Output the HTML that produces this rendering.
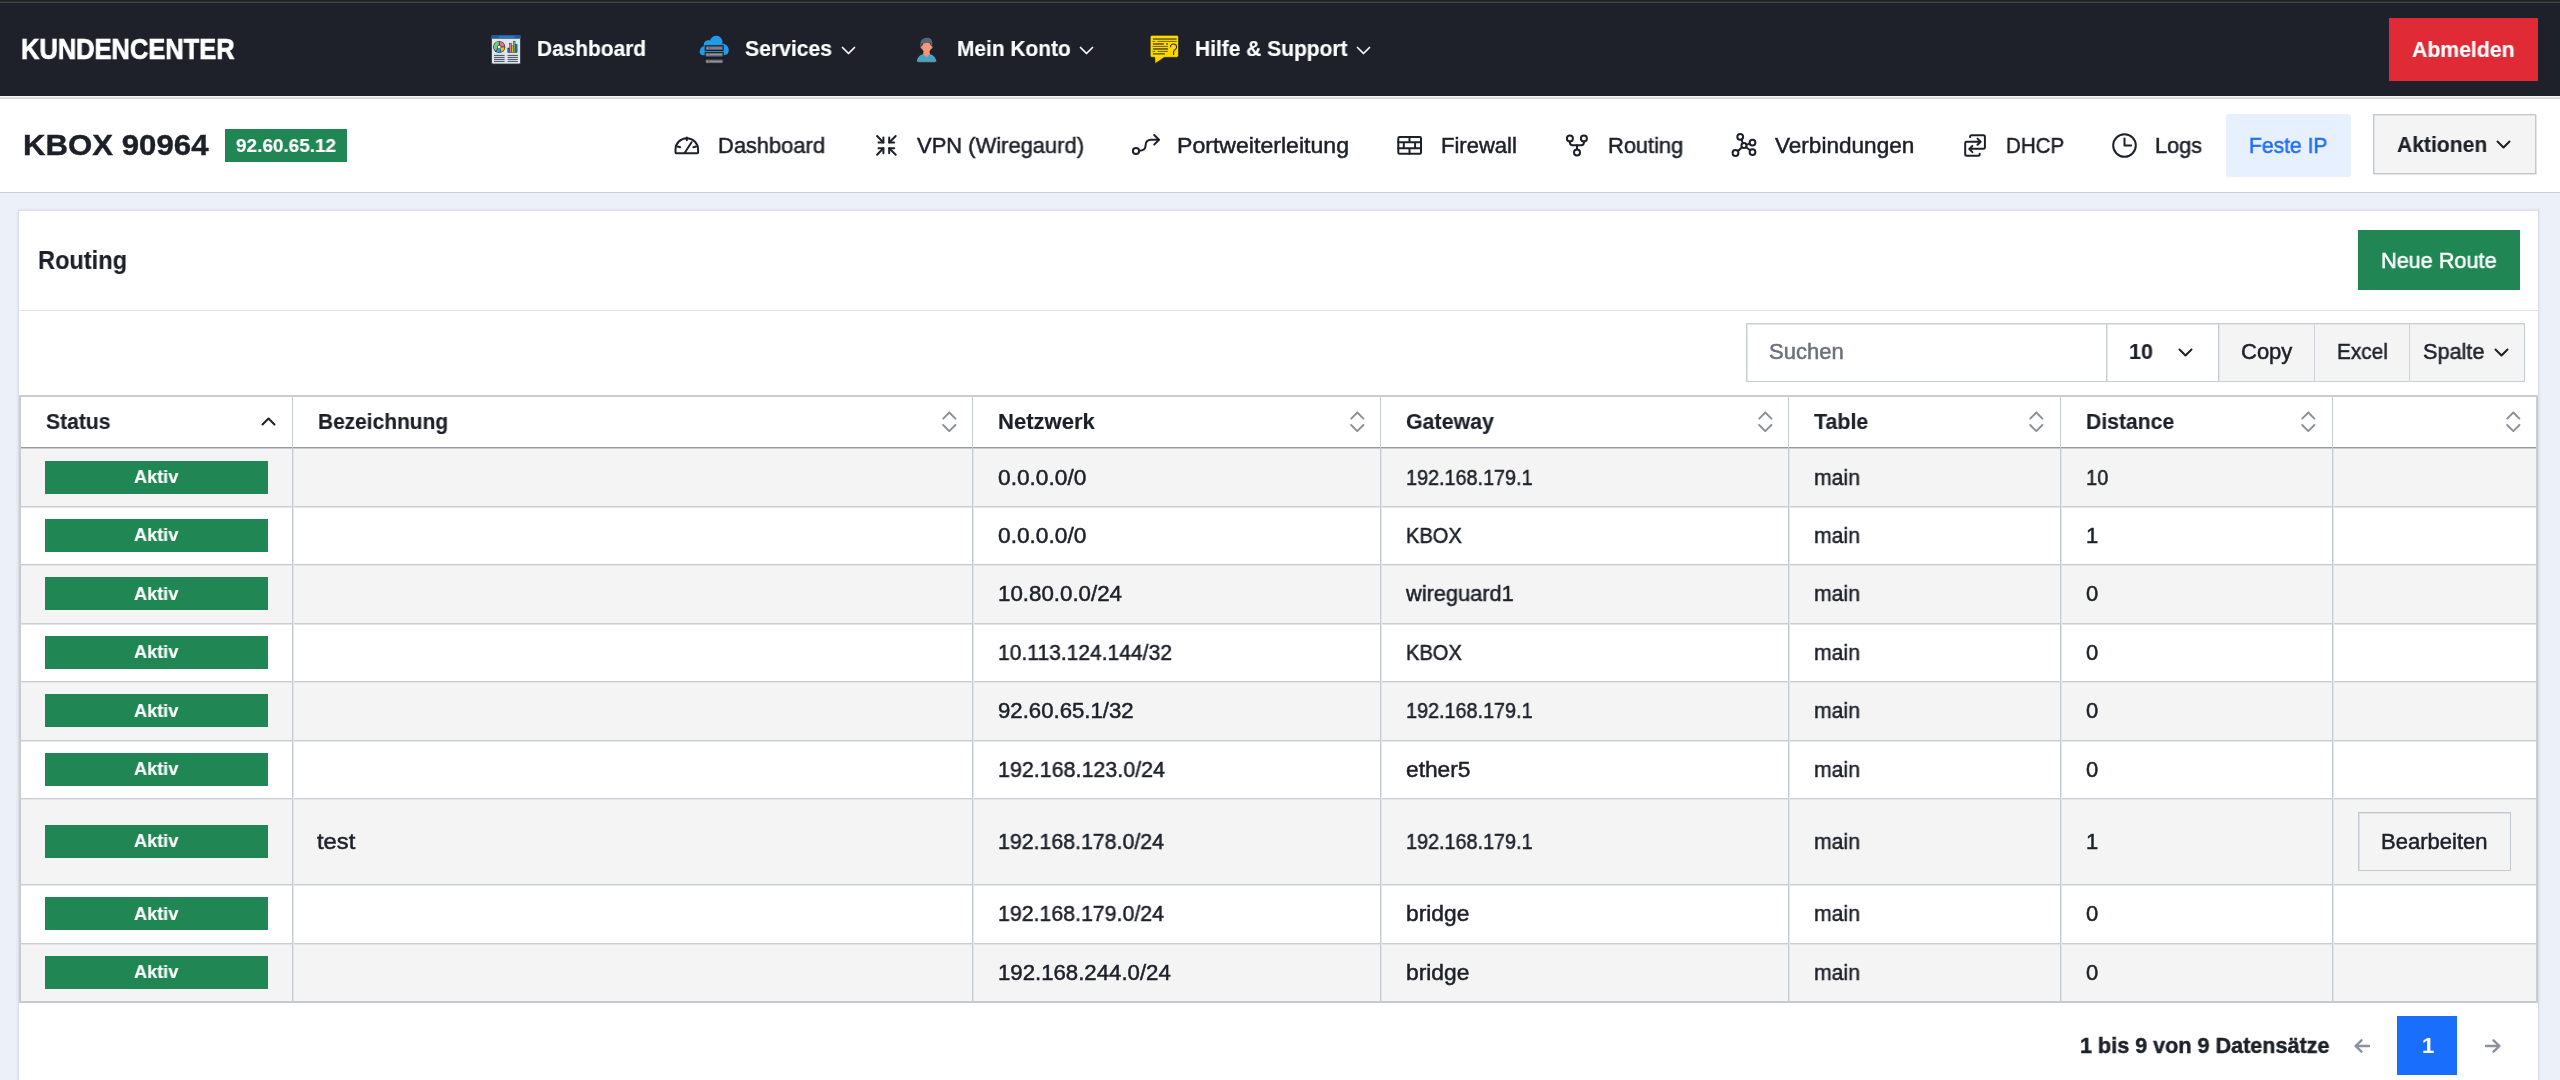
<!DOCTYPE html>
<html><head><meta charset="utf-8"><title>Routing</title>
<style>
html,body{margin:0;padding:0}
body{width:2560px;height:1080px;overflow:hidden;position:relative;background:#ecf0f8;font-family:"Liberation Sans",sans-serif}
.b{position:absolute;display:block}
.t{position:absolute;white-space:nowrap;line-height:1;will-change:transform}
.t.r{-webkit-text-stroke:0.5px currentColor}
.t.bb{-webkit-text-stroke:0.15px currentColor}
</style></head><body>
<div class="b" style="left:0px;top:0px;width:2560px;height:96px;background:#1e212a"></div>
<div class="b" style="left:0px;top:0px;width:2560px;height:1px;background:#212121"></div>
<div class="b" style="left:0px;top:1px;width:2560px;height:1px;background:#2e2e2e"></div>
<div class="b" style="left:0px;top:2px;width:2560px;height:1px;background:#434343"></div>
<div class="b" style="left:0px;top:96px;width:2560px;height:1px;background:#f5f6f8"></div>
<div class="b" style="left:0px;top:97px;width:2560px;height:1px;background:#e4e6ea"></div>
<div class="b" style="left:0px;top:98px;width:2560px;height:1px;background:#cdd0d8"></div>
<div class="b" style="left:0px;top:99px;width:2560px;height:93px;background:#fff"></div>
<div class="b" style="left:0px;top:192px;width:2560px;height:1px;background:#cbced6"></div>
<div class="t bb" style="left:20.80px;top:35.03px;font-size:29px;font-weight:700;color:#fff;letter-spacing:0.00px;-webkit-text-stroke:0.7px #fff;transform:scaleX(0.8783);transform-origin:0.00px 0;">KUNDENCENTER</div>
<svg class="b" style="left:487px;top:31px;" width="38" height="38" viewBox="0 0 38 38">
<rect x="4.5" y="4.5" width="29" height="28.5" rx="1.5" fill="#dfe5ee" stroke="#2d323c" stroke-width="0.8"/>
<rect x="4.2" y="4" width="29.6" height="3.8" rx="1" fill="#285891"/>
<rect x="12" y="4.8" width="15.5" height="2.2" fill="#2f74b8"/>
<circle cx="12.2" cy="16" r="6.1" fill="#33363f"/>
<path d="M12.6 10.6 A5.4 5.4 0 0 1 17.5 15.4 L14.2 15.6 A2 2 0 0 0 12.8 14 Z" fill="#f06b6b"/>
<path d="M17.5 16.2 A5.4 5.4 0 0 1 14.4 20.9 L13.4 17.6 A2 2 0 0 0 14.2 16.5 Z" fill="#f2c500"/>
<path d="M13.8 21.2 A5.4 5.4 0 0 1 9 20.3 L11 17.8 A2 2 0 0 0 12.8 17.9 Z" fill="#27a2f0"/>
<path d="M8.5 19.8 A5.4 5.4 0 0 1 11.9 10.6 L11.8 14 A2 2 0 0 0 10.5 17.2 Z" fill="#6fcf77"/>
<circle cx="12.2" cy="16" r="1.5" fill="#eef1f6"/>
<g stroke="#2d323c" stroke-width="0.5">
<rect x="20.8" y="17" width="1.7" height="4.6" fill="#2f6db5"/>
<rect x="22.6" y="12.2" width="1.7" height="9.4" fill="#e07b78"/>
<rect x="24.5" y="14.8" width="1.7" height="6.8" fill="#e5c11c"/>
<rect x="26.4" y="10.2" width="1.7" height="11.4" fill="#6cc46e"/>
<rect x="28.4" y="13.4" width="1.7" height="8.2" fill="#2f6db5"/>
</g>
<g fill="#4a4f5a">
<rect x="7" y="23.9" width="10.6" height="1"/><rect x="7" y="25.9" width="10.6" height="1"/><rect x="7" y="27.9" width="10.6" height="1"/><rect x="7" y="29.9" width="10.6" height="1"/>
<rect x="20.6" y="23.9" width="10.2" height="1"/><rect x="20.6" y="25.9" width="10.2" height="1"/><rect x="20.6" y="27.9" width="10.2" height="1"/><rect x="20.6" y="29.9" width="10.2" height="1"/>
</g></svg>
<div class="t bb" style="left:536.60px;top:38.25px;font-size:22px;font-weight:700;color:#fff;letter-spacing:0.00px;transform:scaleX(0.9487);transform-origin:0.00px 0;">Dashboard</div>
<svg class="b" style="left:695px;top:30px;" width="40" height="40" viewBox="0 0 40 40">
<path d="M7 25 C3.5 24.5 4 17 8.8 16.2 C8.5 11.5 11.5 9.5 15 10.5 C16.5 5 24.5 3.5 27 9.5 C27.8 11 27.6 12.5 27.2 13.8 C32.5 13.5 35.5 19.5 32.8 23.5 C31.8 24.8 30 25.2 28.5 25.2 L8 25.2 Z" fill="#1f9bea"/>
<g stroke="#1b1d24" stroke-width="1">
<rect x="10.2" y="15.7" width="18" height="4.8" fill="#5f636d"/>
<rect x="10.2" y="22.4" width="18" height="4.6" fill="#6b6f79"/>
<rect x="10.2" y="29.1" width="18" height="4.6" fill="#6b6f79"/>
</g>
<g fill="#9a9ea8">
<circle cx="12.5" cy="18.1" r="0.9"/><circle cx="12.5" cy="24.7" r="0.9"/><circle cx="12.5" cy="31.4" r="0.9"/>
<rect x="15" y="17.6" width="12" height="0.9"/><rect x="15" y="24.2" width="12" height="0.9"/><rect x="15" y="30.9" width="12" height="0.9"/>
</g></svg>
<div class="t bb" style="left:745.00px;top:38.25px;font-size:22px;font-weight:700;color:#fff;letter-spacing:0.00px;transform:scaleX(0.9613);transform-origin:0.00px 0;">Services</div>
<svg class="b" style="left:841px;top:46px;" width="15" height="9" viewBox="0 0 15 9"><path d="M1.5 1.5 L7.5 7.5 L13.5 1.5" fill="none" stroke="#fff" stroke-width="1.7" stroke-linecap="round" stroke-linejoin="round"/></svg>
<svg class="b" style="left:906px;top:30px;" width="40" height="40" viewBox="0 0 40 40">
<path d="M10.8 31.8 C11.2 27 14.5 24.3 18 24 L23 24 C26.5 24.3 29.8 27 30.4 31.8 Z" fill="#45a5c4"/>
<path d="M17.2 21.5 L23.8 21.5 L23.8 24.5 L20.5 27.3 L17.2 24.5 Z" fill="#f1937a"/>
<ellipse cx="16" cy="17.3" rx="1.3" ry="1.6" fill="#d98a78"/><ellipse cx="25.2" cy="17.3" rx="1.3" ry="1.6" fill="#d98a78"/>
<ellipse cx="20.6" cy="17.2" rx="4.6" ry="5.2" fill="#f4977a"/>
<path d="M14.3 16.5 C14 11 15.5 8.5 20.5 7.8 C25 7.5 26.8 10 26.3 15.5 L25.3 16 C25 13.8 24.6 12.8 22.8 12.6 C20.5 13.5 18 13 16 13.2 C15.4 14.2 15.4 15.5 15.3 16.8 Z" fill="#5a6678"/>
<rect x="12.5" y="31.3" width="16.5" height="0.9" fill="#8a8f99"/></svg>
<div class="t bb" style="left:957.00px;top:38.25px;font-size:22px;font-weight:700;color:#fff;letter-spacing:0.00px;transform:scaleX(0.9499);transform-origin:0.00px 0;">Mein Konto</div>
<svg class="b" style="left:1079px;top:46px;" width="15" height="9" viewBox="0 0 15 9"><path d="M1.5 1.5 L7.5 7.5 L13.5 1.5" fill="none" stroke="#fff" stroke-width="1.7" stroke-linecap="round" stroke-linejoin="round"/></svg>
<svg class="b" style="left:1144px;top:30px;" width="40" height="40" viewBox="0 0 40 40">
<path d="M8 5.2 L32.8 5.2 Q34.6 5.2 34.6 7 L34.6 25.6 Q34.6 27.4 32.8 27.4 L20.2 27.4 L11.1 33.7 L10.7 27.4 L8 27.4 Q6.2 27.4 6.2 25.6 L6.2 7 Q6.2 5.2 8 5.2 Z" fill="#fcd800" stroke="#1a1a10" stroke-width="0.7"/>
<g fill="#6a5c00">
<rect x="8.9" y="8.3" width="23.7" height="1.5"/>
<rect x="8.5" y="10.9" width="2.6" height="0.95"/><rect x="13.3" y="10.9" width="19.5" height="0.95"/>
<rect x="8.9" y="13.1" width="10.9" height="1.7"/><rect x="22.2" y="13.1" width="1.8" height="1.7"/>
<rect x="8.5" y="15.9" width="15.5" height="0.95"/>
<rect x="8.9" y="18.1" width="15.1" height="1.7"/>
<rect x="8.5" y="20.9" width="2.6" height="0.95"/><rect x="13.5" y="20.9" width="10.5" height="0.95"/>
<rect x="8.9" y="23.1" width="12" height="1.5"/>
</g>
<path d="M26.6 16.8 C26.6 14.8 28 14 29.5 14 C31.3 14 32.6 15.4 32.6 17.3 C32.6 19.5 29.6 19.8 29.6 22 L29.6 24.4" fill="none" stroke="#2b2a10" stroke-width="1.1" stroke-linecap="round"/></svg>
<div class="t bb" style="left:1195.00px;top:38.25px;font-size:22px;font-weight:700;color:#fff;letter-spacing:0.00px;transform:scaleX(0.9525);transform-origin:0.00px 0;">Hilfe &amp; Support</div>
<svg class="b" style="left:1356px;top:46px;" width="15" height="9" viewBox="0 0 15 9"><path d="M1.5 1.5 L7.5 7.5 L13.5 1.5" fill="none" stroke="#fff" stroke-width="1.7" stroke-linecap="round" stroke-linejoin="round"/></svg>
<div class="b" style="left:2389px;top:18px;width:149px;height:63px;background:#e02a36"></div>
<div class="t bb" style="left:2412.00px;top:38.55px;font-size:22px;font-weight:700;color:#fff;letter-spacing:0.00px;transform:scaleX(0.9638);transform-origin:0.00px 0;">Abmelden</div>
<div class="t bb" style="left:22.60px;top:130.34px;font-size:30px;font-weight:700;color:#1c2029;letter-spacing:0.00px;-webkit-text-stroke:0.4px #1c2029;transform:scaleX(1.0395);transform-origin:0.00px 0;">KBOX 90964</div>
<div class="b" style="left:225px;top:129px;width:122px;height:33px;background:#208754"></div>
<div class="t bb" style="left:236.00px;top:135.52px;font-size:19px;font-weight:700;color:#fff;letter-spacing:0.00px;transform:scaleX(0.9965);transform-origin:0.00px 0;">92.60.65.12</div>
<svg class="b" style="left:666px;top:128px;" width="40" height="34" viewBox="0 0 40 34"><g fill="none" stroke="#1c2029" stroke-width="2" stroke-linecap="round" stroke-linejoin="round">
<path d="M9.5 24.5 L9.5 21.5 A11.3 11.3 0 0 1 32.1 21.5 L32.1 24.5 Q32.1 25.3 31.3 25.3 L10.3 25.3 Q9.5 25.3 9.5 24.5 Z"/>
<path d="M20.8 9.5 L20.8 12.2"/><path d="M11.6 18.5 L14.2 19.2"/><path d="M30 18.5 L27.4 19.2"/>
<path d="M18.6 25 L25.6 14.2"/></g></svg>
<div class="t r" style="left:718.00px;top:134.95px;font-size:22px;font-weight:400;color:#1c2029;letter-spacing:0.00px;transform:scaleX(0.9940);transform-origin:0.00px 0;">Dashboard</div>
<svg class="b" style="left:870px;top:128px;" width="34" height="34" viewBox="0 0 34 34"><g fill="none" stroke="#1c2029" stroke-width="2" stroke-linecap="round" stroke-linejoin="round">
<path d="M7.1 8 L13.4 14.5"/><path d="M13.4 9.6 L13.4 14.5 L8.5 14.5"/>
<path d="M25.7 8 L19.2 14.5"/><path d="M19.2 9.6 L19.2 14.5 L24.2 14.5"/>
<path d="M7.1 26.8 L13.4 20.3"/><path d="M8.5 20.3 L13.4 20.3 L13.4 25.2"/>
<path d="M25.7 26.8 L19.2 20.3"/><path d="M24.2 20.3 L19.2 20.3 L19.2 25.2"/>
</g></svg>
<div class="t r" style="left:917.30px;top:134.95px;font-size:22px;font-weight:400;color:#1c2029;letter-spacing:0.00px;transform:scaleX(0.9970);transform-origin:0.00px 0;">VPN (Wiregaurd)</div>
<svg class="b" style="left:1128px;top:128px;" width="34" height="34" viewBox="0 0 34 34"><g fill="none" stroke="#1c2029" stroke-width="2" stroke-linecap="round" stroke-linejoin="round">
<circle cx="8" cy="23" r="3.1"/>
<path d="M11.1 22.8 C15 22.8 17.6 20.8 17.6 17.3 C17.6 13.8 19.8 11.8 23.2 11.8 L30.6 11.8"/>
<path d="M26.2 7 L31 11.8 L26.2 16.6"/>
</g></svg>
<div class="t r" style="left:1177.00px;top:134.95px;font-size:22px;font-weight:400;color:#1c2029;letter-spacing:0.00px;transform:scaleX(1.0497);transform-origin:0.00px 0;">Portweiterleitung</div>
<svg class="b" style="left:1392px;top:128px;" width="34" height="34" viewBox="0 0 34 34"><g fill="none" stroke="#1c2029" stroke-width="2" stroke-linecap="round" stroke-linejoin="round">
<rect x="6.3" y="9" width="22.7" height="16.8" rx="1.2"/>
<path d="M6.3 14.3 H29 M6.3 20.15 H29 M17.5 9 V14.3 M11.8 14.3 V20.15 M23.1 14.3 V20.15 M17.5 20.15 V25.8"/>
</g></svg>
<div class="t r" style="left:1440.50px;top:134.95px;font-size:22px;font-weight:400;color:#1c2029;letter-spacing:0.00px;transform:scaleX(0.9960);transform-origin:0.00px 0;">Firewall</div>
<svg class="b" style="left:1560px;top:128px;" width="34" height="34" viewBox="0 0 34 34"><g fill="none" stroke="#1c2029" stroke-width="2" stroke-linecap="round" stroke-linejoin="round">
<circle cx="9.9" cy="10.4" r="3"/><circle cx="23.9" cy="10.4" r="3"/><circle cx="17" cy="24.6" r="3"/>
<path d="M9.9 13.4 V14.5 Q9.9 17.2 12.6 17.2 H21.2 Q23.9 17.2 23.9 14.5 V13.4"/>
<path d="M17 17.2 V21.6"/>
</g></svg>
<div class="t r" style="left:1607.70px;top:134.95px;font-size:22px;font-weight:400;color:#1c2029;letter-spacing:0.00px;transform:scaleX(0.9927);transform-origin:0.00px 0;">Routing</div>
<svg class="b" style="left:1727px;top:128px;" width="34" height="34" viewBox="0 0 34 34"><g fill="none" stroke="#1c2029" stroke-width="2" stroke-linecap="round" stroke-linejoin="round">
<circle cx="17" cy="17.5" r="2.6"/>
<circle cx="13.2" cy="8.8" r="2.9"/><circle cx="25.5" cy="14.6" r="2.9"/><circle cx="25.5" cy="24.1" r="2.9"/><circle cx="8.5" cy="25" r="2.9"/>
<path d="M14.4 11.5 L15.8 15"/><path d="M22.8 15.6 L19.5 16.6"/><path d="M19 19.3 L23.2 22.3"/><path d="M15 19.3 L10.8 23.2"/>
</g></svg>
<div class="t r" style="left:1774.70px;top:134.95px;font-size:22px;font-weight:400;color:#1c2029;letter-spacing:0.00px;transform:scaleX(1.0258);transform-origin:0.00px 0;">Verbindungen</div>
<svg class="b" style="left:1958px;top:128px;" width="34" height="34" viewBox="0 0 34 34"><g fill="none" stroke="#1c2029" stroke-width="2" stroke-linecap="round" stroke-linejoin="round">
<path d="M12.1 9 V8.8 Q12.1 7.3 13.6 7.3 H25.4 Q26.9 7.3 26.9 8.8 V19.2 Q26.9 20.7 25.4 20.7 H12"/>
<path d="M14.4 17.9 L11.3 21 L14.4 24.1"/>
<path d="M21.7 25.7 V26.2 Q21.7 27.7 20.2 27.7 H8.7 Q7.2 27.7 7.2 26.2 V15.2 Q7.2 13.7 8.7 13.7 H22.3"/>
<path d="M19.5 10.6 L22.6 13.7 L19.5 16.8"/>
</g></svg>
<div class="t r" style="left:2005.50px;top:134.95px;font-size:22px;font-weight:400;color:#1c2029;letter-spacing:0.00px;transform:scaleX(0.9318);transform-origin:0.00px 0;">DHCP</div>
<svg class="b" style="left:2106px;top:128px;" width="36" height="36" viewBox="0 0 36 36"><g fill="none" stroke="#1c2029" stroke-width="2" stroke-linecap="round" stroke-linejoin="round">
<circle cx="18.5" cy="17.5" r="11.3"/><path d="M18.5 10.5 V17.5 H25.2"/>
</g></svg>
<div class="t r" style="left:2155.00px;top:134.95px;font-size:22px;font-weight:400;color:#1c2029;letter-spacing:0.00px;transform:scaleX(0.9853);transform-origin:0.00px 0;">Logs</div>
<div class="b" style="left:2226px;top:114px;width:125px;height:63px;background:#e7f0fe;border-radius:2px"></div>
<div class="t r" style="left:2249.00px;top:135.05px;font-size:22px;font-weight:400;color:#1f6ff5;letter-spacing:0.00px;transform:scaleX(0.9573);transform-origin:0.00px 0;">Feste IP</div>
<div class="b" style="left:2373px;top:114px;width:163px;height:60px;background:#f4f4f5;border:1px solid #c4c8d0;box-shadow:inset 1px 1px 0 #dfe1e6, 1px 1px 0 #e2e4e8;box-sizing:border-box"></div>
<div class="t bb" style="left:2396.50px;top:133.55px;font-size:22px;font-weight:700;color:#1c2029;letter-spacing:0.00px;transform:scaleX(0.9586);transform-origin:0.00px 0;">Aktionen</div>
<svg class="b" style="left:2496px;top:140px;" width="15" height="9" viewBox="0 0 15 9"><path d="M1.5 1.5 L7.5 7.5 L13.5 1.5" fill="none" stroke="#1c2029" stroke-width="2" stroke-linecap="round" stroke-linejoin="round"/></svg>
<div class="b" style="left:18px;top:210px;width:2521px;height:880px;background:#fff;border:1px solid #dcdee4;box-sizing:border-box;box-shadow:0 0 3px rgba(40,50,80,0.10)"></div>
<div class="t bb" style="left:38.00px;top:247.05px;font-size:26.5px;font-weight:700;color:#1c2029;letter-spacing:0.00px;transform:scaleX(0.8891);transform-origin:0.00px 0;">Routing</div>
<div class="b" style="left:2358px;top:230px;width:162px;height:60px;background:#208754"></div>
<div class="t r" style="left:2381.00px;top:249.55px;font-size:22px;font-weight:400;color:#fff;letter-spacing:0.00px;transform:scaleX(0.9847);transform-origin:0.00px 0;">Neue Route</div>
<div class="b" style="left:19px;top:310px;width:2519px;height:1px;background:#e2e2e2"></div>
<div class="b" style="left:1746px;top:323px;width:361px;height:59px;background:#fff;border:1px solid #c8ccd4;box-shadow:inset 1px 1px 0 #e4e6ea;box-sizing:border-box"></div>
<div class="t r" style="left:1768.60px;top:341.45px;font-size:22px;font-weight:400;color:#6b707a;letter-spacing:0.00px;transform:scaleX(0.9973);transform-origin:0.00px 0;">Suchen</div>
<div class="b" style="left:2106px;top:323px;width:113px;height:59px;background:#fff;border:1px solid #c8ccd4;box-shadow:inset 1px 1px 0 #e4e6ea;box-sizing:border-box"></div>
<div class="t bb" style="left:2128.50px;top:341.45px;font-size:22px;font-weight:700;color:#1c2029;letter-spacing:0.00px;transform:scaleX(0.9775);transform-origin:0.00px 0;">10</div>
<svg class="b" style="left:2178px;top:348px;" width="15" height="9" viewBox="0 0 15 9"><path d="M1.5 1.5 L7.5 7.5 L13.5 1.5" fill="none" stroke="#1c2029" stroke-width="2" stroke-linecap="round" stroke-linejoin="round"/></svg>
<div class="b" style="left:2218px;top:323px;width:307px;height:59px;background:#f4f4f5;border:1px solid #c8ccd4;box-shadow:inset 1px 1px 0 #e4e6ea;box-sizing:border-box"></div>
<div class="b" style="left:2314px;top:323px;width:1px;height:59px;background:#d0d3da"></div>
<div class="b" style="left:2409px;top:323px;width:1px;height:59px;background:#d0d3da"></div>
<div class="t r" style="left:2241.00px;top:341.45px;font-size:22px;font-weight:400;color:#1c2029;letter-spacing:0.00px;transform:scaleX(0.9912);transform-origin:0.00px 0;">Copy</div>
<div class="t r" style="left:2336.80px;top:341.45px;font-size:22px;font-weight:400;color:#1c2029;letter-spacing:0.00px;transform:scaleX(0.9442);transform-origin:0.00px 0;">Excel</div>
<div class="t r" style="left:2423.00px;top:341.45px;font-size:22px;font-weight:400;color:#1c2029;letter-spacing:0.00px;transform:scaleX(0.9840);transform-origin:0.00px 0;">Spalte</div>
<svg class="b" style="left:2494px;top:348px;" width="15" height="9" viewBox="0 0 15 9"><path d="M1.5 1.5 L7.5 7.5 L13.5 1.5" fill="none" stroke="#1c2029" stroke-width="2" stroke-linecap="round" stroke-linejoin="round"/></svg>
<div class="b" style="left:19px;top:395px;width:2519px;height:2px;background:#c9ccd5"></div>
<div class="b" style="left:19px;top:397px;width:2519px;height:50px;background:#fff"></div>
<div class="b" style="left:19px;top:447px;width:2519px;height:1px;background:#949aa7"></div>
<div class="b" style="left:19px;top:448px;width:2519px;height:1px;background:#c9cbd1"></div>
<div class="b" style="left:19px;top:449px;width:2519px;height:57px;background:#f4f4f4"></div>
<div class="b" style="left:45px;top:461px;width:223px;height:33px;background:#208754"></div>
<div class="t bb" style="left:134.00px;top:467.02px;font-size:19px;font-weight:700;color:#fff;letter-spacing:0.00px;transform:scaleX(0.9537);transform-origin:0.00px 0;">Aktiv</div>
<div class="t r" style="left:997.90px;top:466.75px;font-size:22px;font-weight:400;color:#1c2029;letter-spacing:0.00px;transform:scaleX(1.0321);transform-origin:0.00px 0;">0.0.0.0/0</div>
<div class="t r" style="left:1406.00px;top:466.75px;font-size:22px;font-weight:400;color:#1c2029;letter-spacing:0.00px;transform:scaleX(0.8998);transform-origin:0.00px 0;">192.168.179.1</div>
<div class="t r" style="left:1814.00px;top:466.75px;font-size:22px;font-weight:400;color:#1c2029;letter-spacing:0.00px;transform:scaleX(0.9644);transform-origin:0.00px 0;">main</div>
<div class="t r" style="left:2085.70px;top:466.75px;font-size:22px;font-weight:400;color:#1c2029;letter-spacing:0.00px;transform:scaleX(0.9121);transform-origin:0.00px 0;">10</div>
<div class="b" style="left:19px;top:506px;width:2519px;height:58px;background:#fff"></div>
<div class="b" style="left:19px;top:506px;width:2519px;height:1px;background:#cacdd6"></div>
<div class="b" style="left:19px;top:507px;width:2519px;height:1px;background:#e3e5ea"></div>
<div class="b" style="left:45px;top:519px;width:223px;height:33px;background:#208754"></div>
<div class="t bb" style="left:134.00px;top:525.02px;font-size:19px;font-weight:700;color:#fff;letter-spacing:0.00px;transform:scaleX(0.9537);transform-origin:0.00px 0;">Aktiv</div>
<div class="t r" style="left:997.90px;top:524.75px;font-size:22px;font-weight:400;color:#1c2029;letter-spacing:0.00px;transform:scaleX(1.0321);transform-origin:0.00px 0;">0.0.0.0/0</div>
<div class="t r" style="left:1406.00px;top:524.75px;font-size:22px;font-weight:400;color:#1c2029;letter-spacing:0.00px;transform:scaleX(0.9125);transform-origin:0.00px 0;">KBOX</div>
<div class="t r" style="left:1814.00px;top:524.75px;font-size:22px;font-weight:400;color:#1c2029;letter-spacing:0.00px;transform:scaleX(0.9644);transform-origin:0.00px 0;">main</div>
<div class="t r" style="left:2085.70px;top:524.75px;font-size:22px;font-weight:400;color:#1c2029;letter-spacing:0.00px;">1</div>
<div class="b" style="left:19px;top:564px;width:2519px;height:59px;background:#f4f4f4"></div>
<div class="b" style="left:19px;top:564px;width:2519px;height:1px;background:#cacdd6"></div>
<div class="b" style="left:19px;top:565px;width:2519px;height:1px;background:#e3e5ea"></div>
<div class="b" style="left:45px;top:577px;width:223px;height:33px;background:#208754"></div>
<div class="t bb" style="left:134.00px;top:583.52px;font-size:19px;font-weight:700;color:#fff;letter-spacing:0.00px;transform:scaleX(0.9537);transform-origin:0.00px 0;">Aktiv</div>
<div class="t r" style="left:997.90px;top:583.25px;font-size:22px;font-weight:400;color:#1c2029;letter-spacing:0.00px;transform:scaleX(1.0135);transform-origin:0.00px 0;">10.80.0.0/24</div>
<div class="t r" style="left:1406.05px;top:583.25px;font-size:22px;font-weight:400;color:#1c2029;letter-spacing:0.00px;transform:scaleX(0.9908);transform-origin:-0.05px 0;">wireguard1</div>
<div class="t r" style="left:1814.00px;top:583.25px;font-size:22px;font-weight:400;color:#1c2029;letter-spacing:0.00px;transform:scaleX(0.9644);transform-origin:0.00px 0;">main</div>
<div class="t r" style="left:2085.70px;top:583.25px;font-size:22px;font-weight:400;color:#1c2029;letter-spacing:0.00px;">0</div>
<div class="b" style="left:19px;top:623px;width:2519px;height:58px;background:#fff"></div>
<div class="b" style="left:19px;top:623px;width:2519px;height:1px;background:#cacdd6"></div>
<div class="b" style="left:19px;top:624px;width:2519px;height:1px;background:#e3e5ea"></div>
<div class="b" style="left:45px;top:636px;width:223px;height:33px;background:#208754"></div>
<div class="t bb" style="left:134.00px;top:642.02px;font-size:19px;font-weight:700;color:#fff;letter-spacing:0.00px;transform:scaleX(0.9537);transform-origin:0.00px 0;">Aktiv</div>
<div class="t r" style="left:997.90px;top:641.75px;font-size:22px;font-weight:400;color:#1c2029;letter-spacing:0.00px;transform:scaleX(0.9563);transform-origin:0.00px 0;">10.113.124.144/32</div>
<div class="t r" style="left:1406.00px;top:641.75px;font-size:22px;font-weight:400;color:#1c2029;letter-spacing:0.00px;transform:scaleX(0.9125);transform-origin:0.00px 0;">KBOX</div>
<div class="t r" style="left:1814.00px;top:641.75px;font-size:22px;font-weight:400;color:#1c2029;letter-spacing:0.00px;transform:scaleX(0.9644);transform-origin:0.00px 0;">main</div>
<div class="t r" style="left:2085.70px;top:641.75px;font-size:22px;font-weight:400;color:#1c2029;letter-spacing:0.00px;">0</div>
<div class="b" style="left:19px;top:681px;width:2519px;height:59px;background:#f4f4f4"></div>
<div class="b" style="left:19px;top:681px;width:2519px;height:1px;background:#cacdd6"></div>
<div class="b" style="left:19px;top:682px;width:2519px;height:1px;background:#e3e5ea"></div>
<div class="b" style="left:45px;top:694px;width:223px;height:33px;background:#208754"></div>
<div class="t bb" style="left:134.00px;top:700.52px;font-size:19px;font-weight:700;color:#fff;letter-spacing:0.00px;transform:scaleX(0.9537);transform-origin:0.00px 0;">Aktiv</div>
<div class="t r" style="left:997.90px;top:700.25px;font-size:22px;font-weight:400;color:#1c2029;letter-spacing:0.00px;transform:scaleX(1.0078);transform-origin:0.00px 0;">92.60.65.1/32</div>
<div class="t r" style="left:1406.00px;top:700.25px;font-size:22px;font-weight:400;color:#1c2029;letter-spacing:0.00px;transform:scaleX(0.8998);transform-origin:0.00px 0;">192.168.179.1</div>
<div class="t r" style="left:1814.00px;top:700.25px;font-size:22px;font-weight:400;color:#1c2029;letter-spacing:0.00px;transform:scaleX(0.9644);transform-origin:0.00px 0;">main</div>
<div class="t r" style="left:2085.70px;top:700.25px;font-size:22px;font-weight:400;color:#1c2029;letter-spacing:0.00px;">0</div>
<div class="b" style="left:19px;top:740px;width:2519px;height:58px;background:#fff"></div>
<div class="b" style="left:19px;top:740px;width:2519px;height:1px;background:#cacdd6"></div>
<div class="b" style="left:19px;top:741px;width:2519px;height:1px;background:#e3e5ea"></div>
<div class="b" style="left:45px;top:753px;width:223px;height:33px;background:#208754"></div>
<div class="t bb" style="left:134.00px;top:759.02px;font-size:19px;font-weight:700;color:#fff;letter-spacing:0.00px;transform:scaleX(0.9537);transform-origin:0.00px 0;">Aktiv</div>
<div class="t r" style="left:997.90px;top:758.75px;font-size:22px;font-weight:400;color:#1c2029;letter-spacing:0.00px;transform:scaleX(0.9752);transform-origin:0.00px 0;">192.168.123.0/24</div>
<div class="t r" style="left:1406.00px;top:758.75px;font-size:22px;font-weight:400;color:#1c2029;letter-spacing:0.00px;transform:scaleX(1.0337);transform-origin:0.00px 0;">ether5</div>
<div class="t r" style="left:1814.00px;top:758.75px;font-size:22px;font-weight:400;color:#1c2029;letter-spacing:0.00px;transform:scaleX(0.9644);transform-origin:0.00px 0;">main</div>
<div class="t r" style="left:2085.70px;top:758.75px;font-size:22px;font-weight:400;color:#1c2029;letter-spacing:0.00px;">0</div>
<div class="b" style="left:19px;top:798px;width:2519px;height:86px;background:#f4f4f4"></div>
<div class="b" style="left:19px;top:798px;width:2519px;height:1px;background:#cacdd6"></div>
<div class="b" style="left:19px;top:799px;width:2519px;height:1px;background:#e3e5ea"></div>
<div class="b" style="left:45px;top:825px;width:223px;height:33px;background:#208754"></div>
<div class="t bb" style="left:134.00px;top:831.02px;font-size:19px;font-weight:700;color:#fff;letter-spacing:0.00px;transform:scaleX(0.9537);transform-origin:0.00px 0;">Aktiv</div>
<div class="t r" style="left:317.20px;top:830.75px;font-size:22px;font-weight:400;color:#1c2029;letter-spacing:0.00px;transform:scaleX(1.0804);transform-origin:0.00px 0;">test</div>
<div class="t r" style="left:997.90px;top:830.75px;font-size:22px;font-weight:400;color:#1c2029;letter-spacing:0.00px;transform:scaleX(0.9693);transform-origin:0.00px 0;">192.168.178.0/24</div>
<div class="t r" style="left:1406.00px;top:830.75px;font-size:22px;font-weight:400;color:#1c2029;letter-spacing:0.00px;transform:scaleX(0.8998);transform-origin:0.00px 0;">192.168.179.1</div>
<div class="t r" style="left:1814.00px;top:830.75px;font-size:22px;font-weight:400;color:#1c2029;letter-spacing:0.00px;transform:scaleX(0.9644);transform-origin:0.00px 0;">main</div>
<div class="t r" style="left:2085.70px;top:830.75px;font-size:22px;font-weight:400;color:#1c2029;letter-spacing:0.00px;">1</div>
<div class="b" style="left:2358px;top:812px;width:153px;height:59px;background:#f4f4f5;border:1px solid #c4c8d0;box-shadow:inset 1px 1px 0 #dfe1e6;box-sizing:border-box"></div>
<div class="t r" style="left:2381.00px;top:830.65px;font-size:22px;font-weight:400;color:#1c2029;letter-spacing:0.00px;transform:scaleX(1.0009);transform-origin:0.00px 0;">Bearbeiten</div>
<div class="b" style="left:19px;top:884px;width:2519px;height:59px;background:#fff"></div>
<div class="b" style="left:19px;top:884px;width:2519px;height:1px;background:#cacdd6"></div>
<div class="b" style="left:19px;top:885px;width:2519px;height:1px;background:#e3e5ea"></div>
<div class="b" style="left:45px;top:897px;width:223px;height:33px;background:#208754"></div>
<div class="t bb" style="left:134.00px;top:903.52px;font-size:19px;font-weight:700;color:#fff;letter-spacing:0.00px;transform:scaleX(0.9537);transform-origin:0.00px 0;">Aktiv</div>
<div class="t r" style="left:997.90px;top:903.25px;font-size:22px;font-weight:400;color:#1c2029;letter-spacing:0.00px;transform:scaleX(0.9693);transform-origin:0.00px 0;">192.168.179.0/24</div>
<div class="t r" style="left:1406.00px;top:903.25px;font-size:22px;font-weight:400;color:#1c2029;letter-spacing:0.00px;transform:scaleX(1.0352);transform-origin:0.00px 0;">bridge</div>
<div class="t r" style="left:1814.00px;top:903.25px;font-size:22px;font-weight:400;color:#1c2029;letter-spacing:0.00px;transform:scaleX(0.9644);transform-origin:0.00px 0;">main</div>
<div class="t r" style="left:2085.70px;top:903.25px;font-size:22px;font-weight:400;color:#1c2029;letter-spacing:0.00px;">0</div>
<div class="b" style="left:19px;top:943px;width:2519px;height:58px;background:#f4f4f4"></div>
<div class="b" style="left:19px;top:943px;width:2519px;height:1px;background:#cacdd6"></div>
<div class="b" style="left:19px;top:944px;width:2519px;height:1px;background:#e3e5ea"></div>
<div class="b" style="left:45px;top:956px;width:223px;height:33px;background:#208754"></div>
<div class="t bb" style="left:134.00px;top:962.02px;font-size:19px;font-weight:700;color:#fff;letter-spacing:0.00px;transform:scaleX(0.9537);transform-origin:0.00px 0;">Aktiv</div>
<div class="t r" style="left:997.90px;top:961.75px;font-size:22px;font-weight:400;color:#1c2029;letter-spacing:0.00px;transform:scaleX(1.0085);transform-origin:0.00px 0;">192.168.244.0/24</div>
<div class="t r" style="left:1406.00px;top:961.75px;font-size:22px;font-weight:400;color:#1c2029;letter-spacing:0.00px;transform:scaleX(1.0352);transform-origin:0.00px 0;">bridge</div>
<div class="t r" style="left:1814.00px;top:961.75px;font-size:22px;font-weight:400;color:#1c2029;letter-spacing:0.00px;transform:scaleX(0.9644);transform-origin:0.00px 0;">main</div>
<div class="t r" style="left:2085.70px;top:961.75px;font-size:22px;font-weight:400;color:#1c2029;letter-spacing:0.00px;">0</div>
<div class="b" style="left:19px;top:1001px;width:2519px;height:2px;background:#c6cad3"></div>
<div class="b" style="left:292px;top:397px;width:1px;height:604px;background:#c6cad3"></div>
<div class="b" style="left:293px;top:449px;width:1px;height:552px;background:#e4e6eb"></div>
<div class="b" style="left:972px;top:397px;width:1px;height:604px;background:#c6cad3"></div>
<div class="b" style="left:973px;top:449px;width:1px;height:552px;background:#e4e6eb"></div>
<div class="b" style="left:1380px;top:397px;width:1px;height:604px;background:#c6cad3"></div>
<div class="b" style="left:1381px;top:449px;width:1px;height:552px;background:#e4e6eb"></div>
<div class="b" style="left:1788px;top:397px;width:1px;height:604px;background:#c6cad3"></div>
<div class="b" style="left:1789px;top:449px;width:1px;height:552px;background:#e4e6eb"></div>
<div class="b" style="left:2060px;top:397px;width:1px;height:604px;background:#c6cad3"></div>
<div class="b" style="left:2061px;top:449px;width:1px;height:552px;background:#e4e6eb"></div>
<div class="b" style="left:2332px;top:397px;width:1px;height:604px;background:#c6cad3"></div>
<div class="b" style="left:2333px;top:449px;width:1px;height:552px;background:#e4e6eb"></div>
<div class="b" style="left:19px;top:395px;width:2px;height:608px;background:#c9ccd5"></div>
<div class="b" style="left:2536px;top:395px;width:2px;height:608px;background:#c9ccd5"></div>
<div class="t bb" style="left:45.50px;top:411.25px;font-size:22px;font-weight:700;color:#1c2029;letter-spacing:0.00px;transform:scaleX(0.9591);transform-origin:0.00px 0;">Status</div>
<div class="t bb" style="left:317.50px;top:411.25px;font-size:22px;font-weight:700;color:#1c2029;letter-spacing:0.00px;transform:scaleX(0.9503);transform-origin:0.00px 0;">Bezeichnung</div>
<div class="t bb" style="left:998.00px;top:411.25px;font-size:22px;font-weight:700;color:#1c2029;letter-spacing:0.00px;transform:scaleX(1.0016);transform-origin:0.00px 0;">Netzwerk</div>
<div class="t bb" style="left:1406.00px;top:411.25px;font-size:22px;font-weight:700;color:#1c2029;letter-spacing:0.00px;transform:scaleX(0.9713);transform-origin:0.00px 0;">Gateway</div>
<div class="t bb" style="left:1814.00px;top:411.25px;font-size:22px;font-weight:700;color:#1c2029;letter-spacing:0.00px;transform:scaleX(0.9722);transform-origin:0.00px 0;">Table</div>
<div class="t bb" style="left:2086.00px;top:411.25px;font-size:22px;font-weight:700;color:#1c2029;letter-spacing:0.00px;transform:scaleX(0.9618);transform-origin:0.00px 0;">Distance</div>
<svg class="b" style="left:261px;top:417px;" width="15" height="9" viewBox="0 0 15 9"><path d="M1.5 7.5 L7.5 1.5 L13.5 7.5" fill="none" stroke="#1c2029" stroke-width="2" stroke-linecap="round" stroke-linejoin="round"/></svg>
<svg class="b" style="left:941.5px;top:411px;" width="15" height="22" viewBox="0 0 15 22"><path d="M1.2 7.6 L7.3 1.5 L13.4 7.6 M1.2 14 L7.3 20.1 L13.4 14" fill="none" stroke="#8a8f98" stroke-width="1.9" stroke-linecap="round" stroke-linejoin="round"/></svg>
<svg class="b" style="left:1349.6px;top:411px;" width="15" height="22" viewBox="0 0 15 22"><path d="M1.2 7.6 L7.3 1.5 L13.4 7.6 M1.2 14 L7.3 20.1 L13.4 14" fill="none" stroke="#8a8f98" stroke-width="1.9" stroke-linecap="round" stroke-linejoin="round"/></svg>
<svg class="b" style="left:1757.7px;top:411px;" width="15" height="22" viewBox="0 0 15 22"><path d="M1.2 7.6 L7.3 1.5 L13.4 7.6 M1.2 14 L7.3 20.1 L13.4 14" fill="none" stroke="#8a8f98" stroke-width="1.9" stroke-linecap="round" stroke-linejoin="round"/></svg>
<svg class="b" style="left:2029px;top:411px;" width="15" height="22" viewBox="0 0 15 22"><path d="M1.2 7.6 L7.3 1.5 L13.4 7.6 M1.2 14 L7.3 20.1 L13.4 14" fill="none" stroke="#8a8f98" stroke-width="1.9" stroke-linecap="round" stroke-linejoin="round"/></svg>
<svg class="b" style="left:2301.4px;top:411px;" width="15" height="22" viewBox="0 0 15 22"><path d="M1.2 7.6 L7.3 1.5 L13.4 7.6 M1.2 14 L7.3 20.1 L13.4 14" fill="none" stroke="#8a8f98" stroke-width="1.9" stroke-linecap="round" stroke-linejoin="round"/></svg>
<svg class="b" style="left:2505.8px;top:411px;" width="15" height="22" viewBox="0 0 15 22"><path d="M1.2 7.6 L7.3 1.5 L13.4 7.6 M1.2 14 L7.3 20.1 L13.4 14" fill="none" stroke="#8a8f98" stroke-width="1.9" stroke-linecap="round" stroke-linejoin="round"/></svg>
<div class="t bb" style="left:2079.50px;top:1034.65px;font-size:22px;font-weight:700;color:#1c2029;letter-spacing:0.00px;-webkit-text-stroke:0.45px #1c2029;transform:scaleX(0.9811);transform-origin:0.00px 0;">1 bis 9 von 9 Datensätze</div>
<svg class="b" style="left:2350px;top:1034px;" width="24" height="24" viewBox="0 0 24 24"><path d="M19 12 H6 M11.5 6.3 L5.5 12 L11.5 17.7" fill="none" stroke="#8a919c" stroke-width="2.4" stroke-linecap="round" stroke-linejoin="round"/></svg>
<div class="b" style="left:2397px;top:1016px;width:60px;height:59px;background:#1a6efc"></div>
<div class="t bb" style="left:2422.00px;top:1034.65px;font-size:22px;font-weight:700;color:#fff;letter-spacing:0.00px;">1</div>
<svg class="b" style="left:2481px;top:1034px;" width="24" height="24" viewBox="0 0 24 24"><path d="M5 12 H18 M12.5 6.3 L18.5 12 L12.5 17.7" fill="none" stroke="#8a919c" stroke-width="2.4" stroke-linecap="round" stroke-linejoin="round"/></svg>
</body></html>
